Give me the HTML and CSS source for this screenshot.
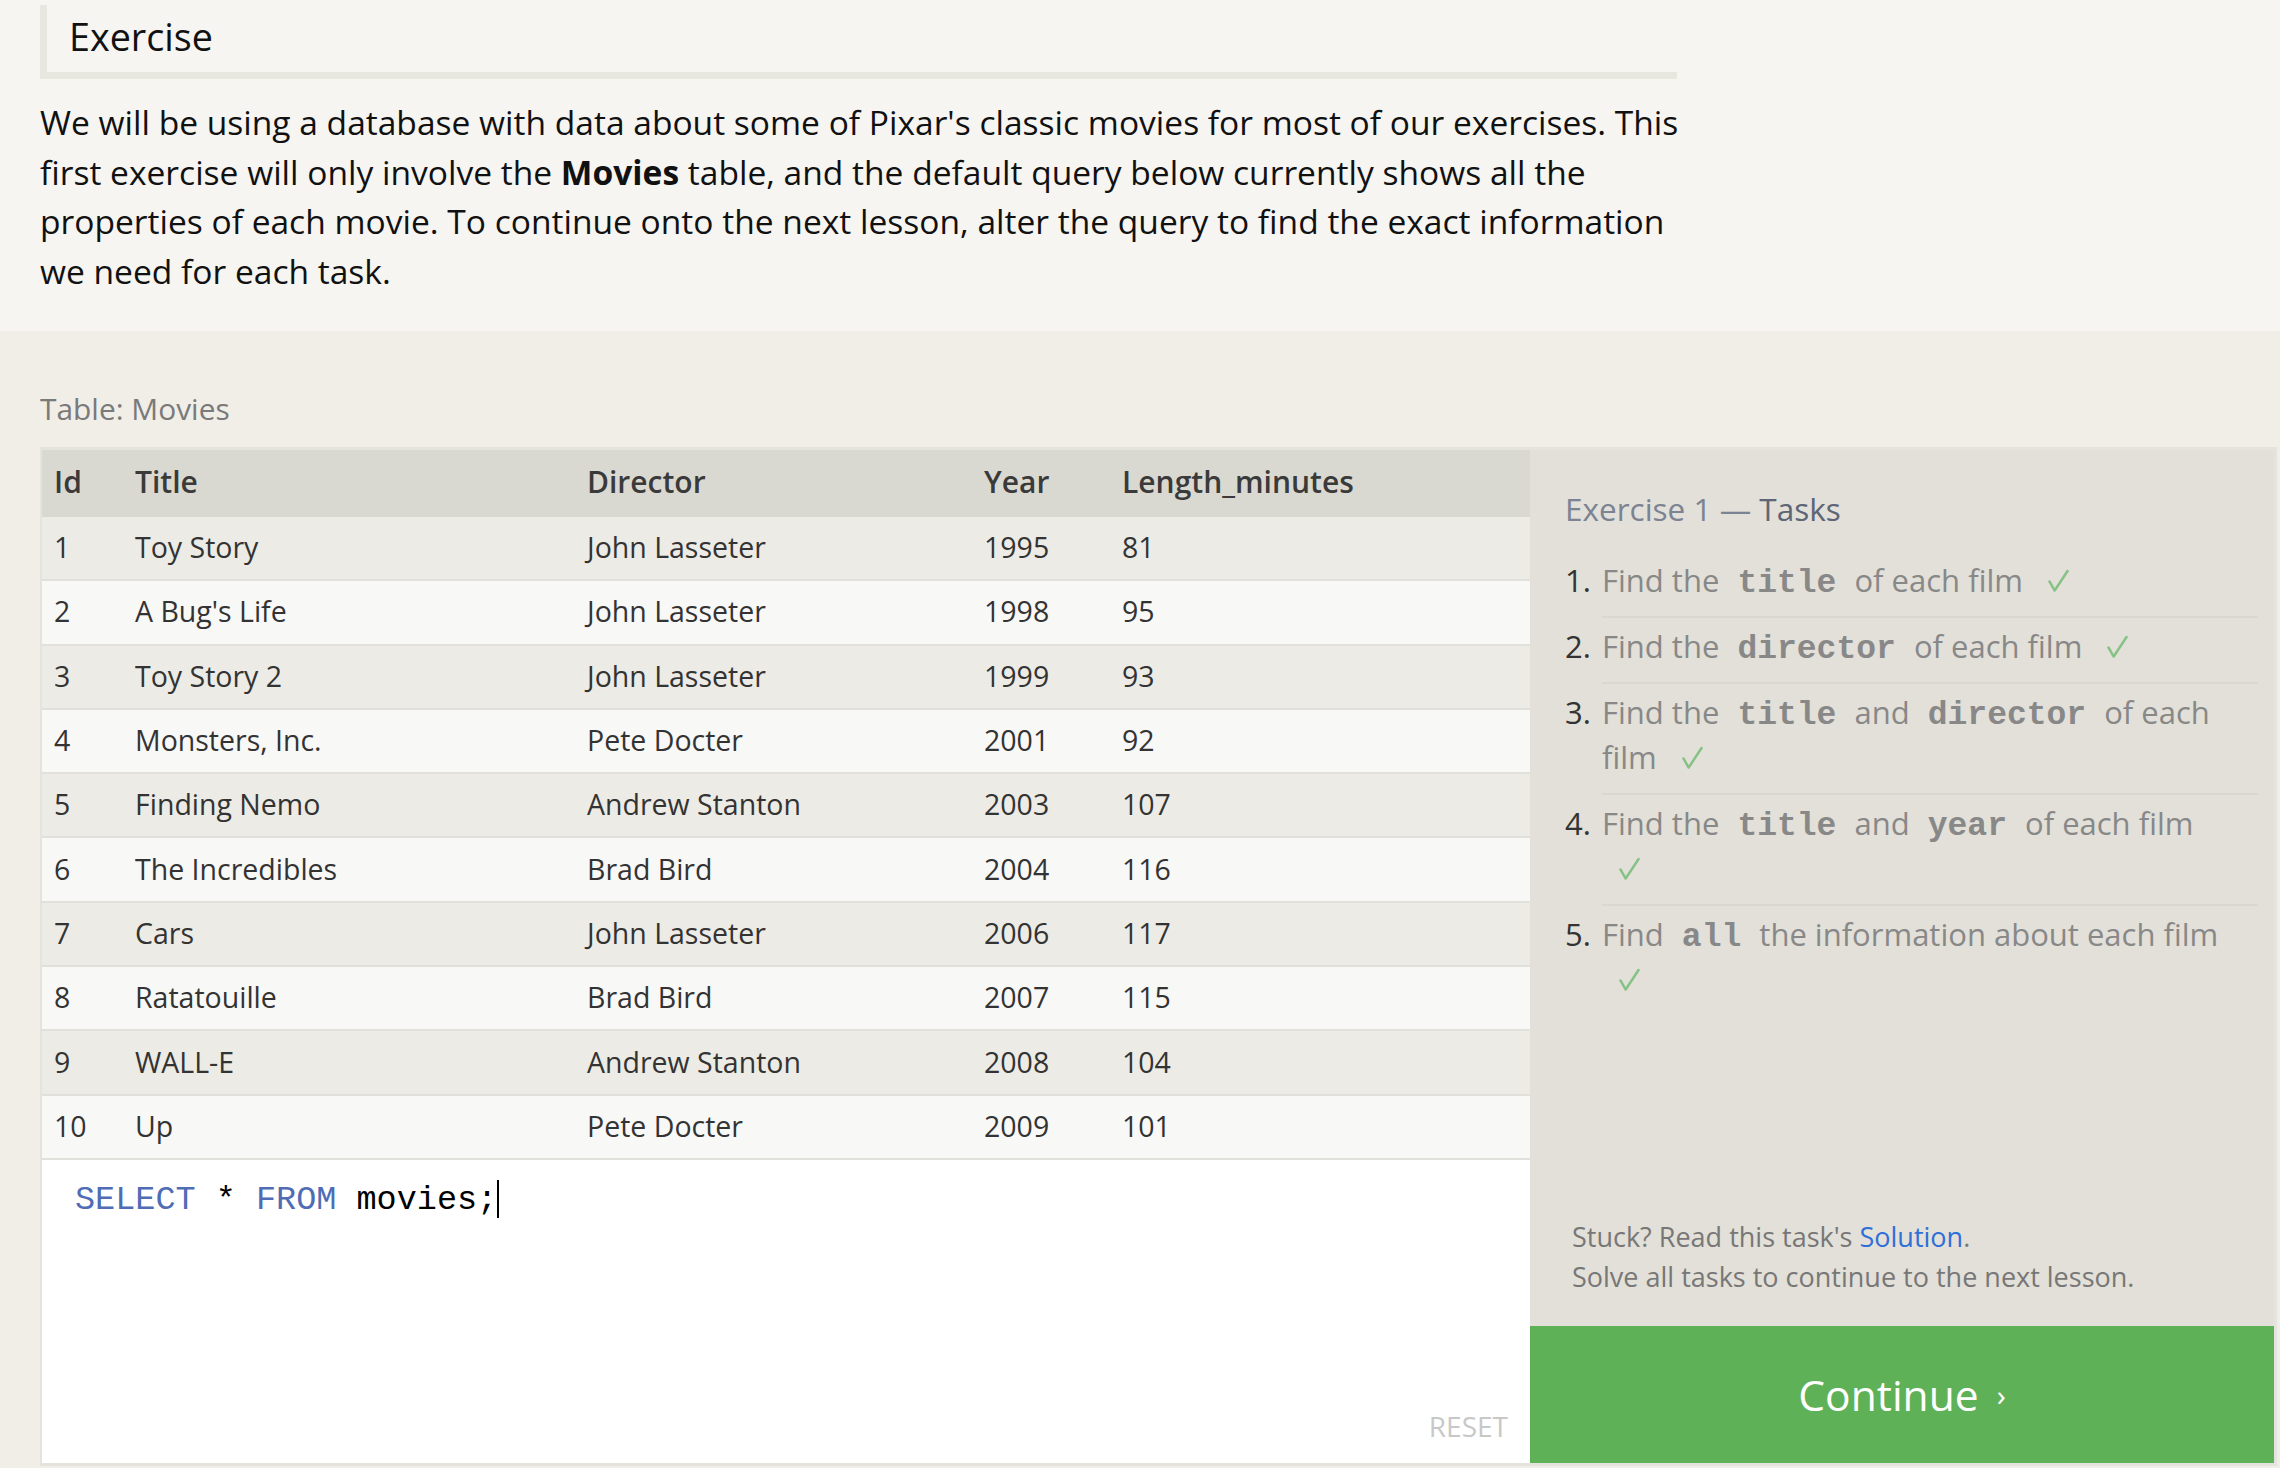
FILE: index.html
```html
<!DOCTYPE html>
<html lang="en">
<head>
<meta charset="utf-8">
<title>SQL Lesson 1</title>
<link rel="stylesheet" href="styles.css">
</head>
<body>
<section class="intro">
  <h2 class="intro-title">Exercise</h2>
  <p class="intro-text">We will be using a database with data about some of Pixar's classic movies for most of our exercises. This first exercise will only involve the <strong>Movies</strong> table, and the default query below currently shows all the properties of each movie. To continue onto the next lesson, alter the query to find the exact information we need for each task.</p>
</section>
<section class="lesson">
  <div class="table-label">Table: Movies</div>
  <div class="workspace">
    <div class="work-left">
      <table class="movies">
        <colgroup><col class="c-id"><col class="c-title"><col class="c-dir"><col class="c-year"><col></colgroup>
        <thead>
          <tr><th>Id</th><th>Title</th><th>Director</th><th>Year</th><th>Length_minutes</th></tr>
        </thead>
        <tbody>
          <tr><td>1</td><td>Toy Story</td><td>John Lasseter</td><td>1995</td><td>81</td></tr>
          <tr><td>2</td><td>A Bug's Life</td><td>John Lasseter</td><td>1998</td><td>95</td></tr>
          <tr><td>3</td><td>Toy Story 2</td><td>John Lasseter</td><td>1999</td><td>93</td></tr>
          <tr><td>4</td><td>Monsters, Inc.</td><td>Pete Docter</td><td>2001</td><td>92</td></tr>
          <tr><td>5</td><td>Finding Nemo</td><td>Andrew Stanton</td><td>2003</td><td>107</td></tr>
          <tr><td>6</td><td>The Incredibles</td><td>Brad Bird</td><td>2004</td><td>116</td></tr>
          <tr><td>7</td><td>Cars</td><td>John Lasseter</td><td>2006</td><td>117</td></tr>
          <tr><td>8</td><td>Ratatouille</td><td>Brad Bird</td><td>2007</td><td>115</td></tr>
          <tr><td>9</td><td>WALL-E</td><td>Andrew Stanton</td><td>2008</td><td>104</td></tr>
          <tr><td>10</td><td>Up</td><td>Pete Docter</td><td>2009</td><td>101</td></tr>
        </tbody>
      </table>
      <div class="editor">
        <div class="code"><span class="kw">SELECT</span> * <span class="kw">FROM</span> movies;<span class="cursor"></span></div>
        <div class="reset">RESET</div>
      </div>
    </div>
    <aside class="tasks">
      <h3 class="tasks-title">Exercise 1 — <span class="tasks-word">Tasks</span></h3>
      <ol class="task-list">
        <li class="task"><span class="task-num">1.</span><span class="task-body">Find the <code>title</code> of each film <span class="check"><svg class="check-icon" viewBox="0 0 22 24" aria-hidden="true"><path d="M1.5 12.5 L7 22 L20.5 1.5"/></svg></span></span></li>
        <li class="task"><span class="task-num">2.</span><span class="task-body">Find the <code>director</code> of each film <span class="check"><svg class="check-icon" viewBox="0 0 22 24" aria-hidden="true"><path d="M1.5 12.5 L7 22 L20.5 1.5"/></svg></span></span></li>
        <li class="task"><span class="task-num">3.</span><span class="task-body">Find the <code>title</code> and <code>director</code> of each film <span class="check"><svg class="check-icon" viewBox="0 0 22 24" aria-hidden="true"><path d="M1.5 12.5 L7 22 L20.5 1.5"/></svg></span></span></li>
        <li class="task"><span class="task-num">4.</span><span class="task-body">Find the <code>title</code> and <code>year</code> of each film <span class="check"><svg class="check-icon" viewBox="0 0 22 24" aria-hidden="true"><path d="M1.5 12.5 L7 22 L20.5 1.5"/></svg></span></span></li>
        <li class="task"><span class="task-num">5.</span><span class="task-body">Find <code>all</code> the information about each film <span class="check"><svg class="check-icon" viewBox="0 0 22 24" aria-hidden="true"><path d="M1.5 12.5 L7 22 L20.5 1.5"/></svg></span></span></li>
      </ol>
      <div class="tasks-fill"></div>
      <p class="hint">Stuck? Read this task's <a class="hint-link" href="#">Solution</a>.<br>Solve all tasks to continue to the next lesson.</p>
      <div class="continue">Continue<span class="chev">›</span></div>
    </aside>
  </div>
</section>
</body>
</html>
```
FILE: styles.css
```css
* { box-sizing: border-box; }
html, body { margin: 0; padding: 0; }
body {
  background: #f0eee7;
  font-family: "Open Sans", "Noto Sans", sans-serif;
  color: #111;
}
.intro {
  background: #f6f5f1;
  height: 331px;
  padding: 5px 0 0 40px;
}
.intro-title {
  margin: 0;
  width: 1637px;
  font-size: 37.7px;
  font-weight: 400;
  line-height: 48px;
  padding: 8px 0 11px 22px;
  border-left: 7px solid #e8e7df;
  border-bottom: 7px solid #e8e7df;
}
.intro-text {
  margin: 19px 0 0;
  width: 1650px;
  font-size: 33.55px;
  line-height: 49.5px;
}
.intro-text strong { font-weight: 700; }
.lesson { padding: 59px 3px 0 40px; }
.table-label {
  font-size: 29.9px;
  line-height: 37px;
  color: #7a7a7a;
  margin-bottom: 20px;
}
.workspace {
  display: flex;
  border-style: solid;
  border-color: #e4e3dd;
  border-width: 3px 3px 3px 2px;
}
.work-left {
  width: 1488px;
  display: flex;
  flex-direction: column;
}
.movies {
  width: 100%;
  table-layout: fixed;
  border-collapse: separate;
  border-spacing: 0;
  font-size: 28.5px;
  color: #333;
}
.c-id { width: 81px; }
.c-title { width: 452px; }
.c-dir { width: 397px; }
.c-year { width: 138px; }
.movies th {
  height: 67px;
  background: #dad9d1;
  text-align: left;
  font-size: 30px;
  font-weight: 600;
  padding: 0 0 4px 12px;
  color: #3a3a3a;
}
.movies td {
  height: 64.3px;
  padding: 0 0 2px 12px;
  border-bottom: 2px solid #e1e0db;
  background: #f8f8f7;
}
.movies tbody tr:nth-child(odd) td { background: #ecebe5; }
.editor {
  flex: 1;
  min-height: 303px;
  background: #fff;
  display: flex;
  flex-direction: column;
  padding: 20px 22px 18px 33px;
}
.code {
  font-family: "Liberation Mono", "Courier New", monospace;
  font-size: 33.5px;
  color: #000;
  white-space: pre;
}
.kw { color: #4f6cb5; }
.cursor {
  display: inline-block;
  width: 2px;
  height: 38px;
  background: #000;
  vertical-align: -9px;
}
.reset {
  margin-top: auto;
  align-self: flex-end;
  font-size: 28px;
  color: #c8c8c8;
}
.tasks {
  width: 744px;
  background: #e2e0d8;
  display: flex;
  flex-direction: column;
  padding-top: 37px;
}
.tasks-title {
  margin: 0 0 22px 35px;
  font-size: 31.5px;
  font-weight: 400;
  color: #7c8393;
}
.tasks-word { color: #5d6576; }
.task-list {
  list-style: none;
  margin: 0;
  padding: 0 16px 0 35px;
}
.task {
  display: flex;
  font-size: 31px;
  line-height: 45px;
}
.task-num {
  width: 37px;
  flex: none;
  color: #333;
  padding-top: 6px;
}
.task-body {
  flex: 1;
  color: #888;
  padding: 6px 30px 13px 0;
  border-bottom: 2px solid #d9d7cf;
}
.task:last-child .task-body { border-bottom: 0; }
.task-body code {
  font-family: "Liberation Mono", "Courier New", monospace;
  font-weight: 700;
  font-size: 33px;
  line-height: 1;
  padding: 0 10px;
  color: #888;
}
.check {
  display: inline-block;
  margin-left: 17px;
  width: 21px;
  height: 24px;
  line-height: 1;
  vertical-align: -1px;
}
.check-icon {
  display: block;
  width: 21px;
  height: 24px;
  fill: none;
  stroke: #86c286;
  stroke-width: 2.6;
  stroke-linecap: round;
  stroke-linejoin: round;
}
.tasks-fill { flex: 1; }
.hint {
  margin: 0 0 29px 42px;
  font-size: 27px;
  line-height: 40px;
  color: #777;
}
.hint-link { color: #2f6fd8; text-decoration: none; }
.continue {
  height: 137px;
  background: #5fb158;
  color: #fff;
  font-size: 42.5px;
  display: flex;
  align-items: center;
  justify-content: center;
}
.chev { font-size: 30px; margin-left: 18px; }
```
